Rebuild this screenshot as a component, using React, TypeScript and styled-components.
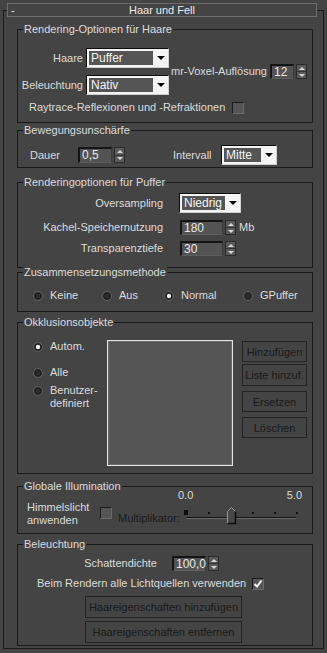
import React from "react";
import styled, { createGlobalStyle } from "styled-components";

const GlobalStyle = createGlobalStyle`
  html, body {
    margin: 0;
    padding: 0;
    background: #444444;
  }
  body {
    font-family: "Liberation Sans", Arial, sans-serif;
    font-size: 11px;
    color: #dcdcdc;
  }
  * {
    box-sizing: border-box;
  }
`;

const Page = styled.div`
  width: 327px;
  height: 653px;
  padding-top: 10px;
  overflow: hidden;
`;

const Frame = styled.div`
  margin-left: 3px;
  width: 321px;
  height: 639px;
  border: 1px solid #1a1a1a;
`;

const Header = styled.div`
  margin: -8px 6px 0 3px;
  height: 14px;
  border: 1px solid #6e6e6e;
  background: #444444;
  display: grid;
  grid-template-columns: 24px 1fr 24px;
  align-items: center;
  line-height: 12px;
  color: #ececec;
`;

const Collapse = styled.span`
  padding-left: 3px;
`;

const HeaderTitle = styled.span`
  text-align: center;
`;

const Group = styled.div<{ $mt: number; $h: number }>`
  margin: ${(p) => p.$mt}px 0 0 13px;
  width: 296px;
  height: ${(p) => p.$h}px;
  border: 1px solid #1a1a1a;
`;

const GroupTitle = styled.div`
  width: fit-content;
  margin: -7px 0 0 5px;
  padding: 0 1px;
  height: 13px;
  line-height: 13px;
  background: #444444;
  white-space: nowrap;
`;

const Row = styled.div<{ $mt?: number; $pl?: number; $h?: number }>`
  display: flex;
  align-items: center;
  margin-top: ${(p) => p.$mt ?? 0}px;
  padding-left: ${(p) => p.$pl ?? 0}px;
  height: ${(p) => (p.$h ? `${p.$h}px` : "auto")};
`;

const Label = styled.span<{ $w?: number; $right?: boolean; $ml?: number; $dim?: boolean }>`
  display: inline-block;
  white-space: nowrap;
  line-height: 13px;
  width: ${(p) => (p.$w ? `${p.$w}px` : "auto")};
  margin-left: ${(p) => p.$ml ?? 0}px;
  text-align: ${(p) => (p.$right ? "right" : "left")};
  color: ${(p) => (p.$dim ? "#1a1a1a" : "#dcdcdc")};
`;

/* dropdown */
const Drop = styled.div<{ $w: number; $ml?: number }>`
  display: flex;
  width: ${(p) => p.$w}px;
  height: 20px;
  margin-left: ${(p) => p.$ml ?? 0}px;
  background: #f4f4f4;
  border-top: 1px solid #0c0c0c;
  border-left: 1px solid #0c0c0c;
  border-right: 1px solid #d0d0d0;
  border-bottom: 1px solid #d0d0d0;
  padding: 2px 0 2px 2px;
`;

const DropText = styled.div`
  flex: 1;
  background: #555555;
  color: #f4f4f4;
  padding-left: 2px;
  line-height: 14px;
  font-size: 12px;
`;

const DropArrow = styled.div`
  width: 15px;
  display: flex;
  align-items: center;
  justify-content: center;
  &::after {
    content: "";
    border-left: 4px solid transparent;
    border-right: 4px solid transparent;
    border-top: 4px solid #000000;
  }
`;

const Dropdown = ({ value, w, ml }: { value: string; w: number; ml?: number }) => (
  <Drop $w={w} $ml={ml}>
    <DropText>{value}</DropText>
    <DropArrow />
  </Drop>
);

/* spinner */
const Field = styled.div<{ $w: number; $h?: number; $ml?: number }>`
  width: ${(p) => p.$w}px;
  height: ${(p) => p.$h ?? 15}px;
  margin-left: ${(p) => p.$ml ?? 0}px;
  background: #535353;
  border-top: 2px solid #141414;
  border-left: 2px solid #141414;
  border-right: 1px solid #3c3c3c;
  border-bottom: 1px solid #5e5e5e;
  color: #e8e8e8;
  padding-left: 2px;
  line-height: 12px;
  font-size: 12px;
`;

const SpinBox = styled.div<{ $h?: number }>`
  width: 11px;
  height: ${(p) => p.$h ?? 15}px;
  margin-left: 2px;
  border: 1px solid #2a2a2a;
  background: #5a5a5a;
  display: flex;
  flex-direction: column;
`;

const SpinHalf = styled.div<{ $down?: boolean }>`
  flex: 1;
  display: flex;
  align-items: center;
  justify-content: center;
  border-top: ${(p) => (p.$down ? "1px solid #343434" : "none")};
  &::after {
    content: "";
    border-left: 3px solid transparent;
    border-right: 3px solid transparent;
    ${(p) => (p.$down ? "border-top: 3px solid #d6d6d6;" : "border-bottom: 3px solid #d6d6d6;")}
  }
`;

const Spinner = ({ value, w, h, ml }: { value: string; w: number; h?: number; ml?: number }) => (
  <>
    <Field $w={w} $h={h} $ml={ml}>
      {value}
    </Field>
    <SpinBox $h={h}>
      <SpinHalf />
      <SpinHalf $down />
    </SpinBox>
  </>
);

/* checkbox, radio */
const Check = styled.div<{ $ml?: number; $mt?: number }>`
  width: 12px;
  height: 12px;
  margin-left: ${(p) => p.$ml ?? 0}px;
  margin-top: ${(p) => p.$mt ?? 0}px;
  flex-shrink: 0;
  background: #555555;
  border-top: 1px solid #1a1a1a;
  border-left: 1px solid #1a1a1a;
  border-right: 1px solid #6a6a6a;
  border-bottom: 1px solid #6a6a6a;
  display: flex;
  align-items: center;
  justify-content: center;
`;

const Checkbox = ({ checked, ml, mt }: { checked?: boolean; ml?: number; mt?: number }) => (
  <Check $ml={ml} $mt={mt}>
    {checked && (
      <svg width="10" height="10" viewBox="0 0 10 10">
        <path d="M1.5 5 L4 7.5 L8.5 1.5" stroke="#f2f2f2" strokeWidth="2" fill="none" />
      </svg>
    )}
  </Check>
);

const Radio = ({ on }: { on?: boolean }) => (
  <svg width="10" height="10" viewBox="0 0 10 10" style={{ flexShrink: 0 }}>
    <circle cx="5" cy="5" r="4.5" fill="#2c2c2c" stroke="#626262" />
    <circle cx="5" cy="5" r="3" fill="none" stroke="#1c1c1c" />
    {on && <circle cx="5" cy="5" r="2.2" fill="#f2f2f2" />}
  </svg>
);

const RadioItem = styled.div<{ $w?: number; $mt?: number }>`
  display: flex;
  align-items: flex-start;
  gap: 7px;
  width: ${(p) => (p.$w ? `${p.$w}px` : "auto")};
  margin-top: ${(p) => p.$mt ?? 0}px;
  line-height: 13px;
  svg {
    margin-top: 2px;
  }
`;

/* group 1 */
const DropGrid = styled.div`
  display: grid;
  grid-template-columns: 65px 83px;
  column-gap: 3px;
  row-gap: 7px;
  align-items: center;
`;

/* group 3 / 7 forms */
const FormRow = styled.div<{ $mt: number; $col: number; $gap: number; $h: number }>`
  display: flex;
  align-items: center;
  margin-top: ${(p) => p.$mt}px;
  height: ${(p) => p.$h}px;
  & > span:first-child {
    width: ${(p) => p.$col}px;
    margin-right: ${(p) => p.$gap}px;
    text-align: right;
  }
`;

/* occlusion */
const OccRow = styled.div`
  display: flex;
  align-items: flex-start;
  margin-top: 11px;
  padding-left: 15px;
`;

const RadioCol = styled.div`
  width: 74px;
  display: flex;
  flex-direction: column;
`;

const ListBox = styled.div`
  width: 126px;
  height: 126px;
  background: #555555;
  border: 1px solid #e6e6e6;
  box-shadow: inset 0 0 0 1px #6a6a6a;
`;

const ButtonCol = styled.div`
  display: flex;
  flex-direction: column;
  margin-left: 9px;
`;

const Button = styled.div<{ $w: number; $h: number; $mt?: number; $ml?: number }>`
  width: ${(p) => p.$w}px;
  height: ${(p) => p.$h}px;
  margin-top: ${(p) => p.$mt ?? 0}px;
  margin-left: ${(p) => p.$ml ?? 0}px;
  border: 1px solid #242424;
  color: #1a1a1a;
  display: flex;
  align-items: center;
  justify-content: center;
  white-space: nowrap;
  font-size: 11px;
`;

/* global illumination */
const TwoLine = styled.div`
  width: 73px;
  line-height: 13px;
  padding-left: 9px;
  box-sizing: content-box;
`;

const SliderBlock = styled.div`
  width: 125px;
  margin-top: -12px;
  display: flex;
  flex-direction: column;
`;

const Scale = styled.div`
  display: flex;
  justify-content: space-between;
  line-height: 12px;
  height: 12px;
  color: #dcdcdc;
  padding-right: 1px;
`;

const Slider = () => (
  <svg width="116" height="24" viewBox="0 0 116 24" style={{ marginLeft: 5 }}>
    <rect x="1" y="9" width="4" height="5" fill="#0c0c0c" />
    {[25, 69, 91, 113].map((x) => (
      <rect key={x} x={x} y="11" width="2" height="2" fill="#111" />
    ))}
    <line x1="3" y1="16.5" x2="113" y2="16.5" stroke="#161616" />
    <line x1="3" y1="17.5" x2="113" y2="17.5" stroke="#6a6a6a" />
    <path d="M44.5 22.5 V10.5 L48.5 6.5 L52.5 10.5 V22.5 Z" fill="#474747" stroke="#9a9a9a" />
    <path d="M44.5 22.5 H52.5 V10.5" fill="none" stroke="#0c0c0c" strokeWidth="1.5" />
  </svg>
);

export default function App() {
  return (
    <>
      <GlobalStyle />
      <Page>
        <Frame>
          <Header>
            <Collapse>-</Collapse>
            <HeaderTitle>Haar und Fell</HeaderTitle>
            <span />
          </Header>

          <Group $mt={12} $h={94}>
            <GroupTitle>Rendering-Optionen für Haare</GroupTitle>
            <Row $mt={12}>
              <DropGrid>
                <Label $right>Haare</Label>
                <Dropdown value="Puffer" w={83} />
                <Label $right>Beleuchtung</Label>
                <Dropdown value="Nativ" w={83} />
              </DropGrid>
              <Label $ml={2}>mr-Voxel-Auflösung</Label>
              <Spinner value="12" w={24} ml={3} />
            </Row>
            <Row $mt={6} $pl={11} $h={13}>
              <Label>Raytrace-Reflexionen und -Refraktionen</Label>
              <Checkbox ml={7} />
            </Row>
          </Group>

          <Group $mt={7} $h={38}>
            <GroupTitle>Bewegungsunschärfe</GroupTitle>
            <Row $mt={8} $pl={12} $h={20}>
              <Label $w={48}>Dauer</Label>
              <Spinner value="0,5" w={34} h={16} />
              <Label $w={48} $ml={48}>
                Intervall
              </Label>
              <Dropdown value="Mitte" w={56} />
            </Row>
          </Group>

          <Group $mt={14} $h={86}>
            <GroupTitle>Renderingoptionen für Puffer</GroupTitle>
            <FormRow $mt={4} $col={145} $gap={16} $h={20}>
              <Label>Oversampling</Label>
              <Dropdown value="Niedrig" w={62} />
            </FormRow>
            <FormRow $mt={7} $col={145} $gap={17} $h={15}>
              <Label>Kachel-Speichernutzung</Label>
              <Spinner value="180" w={43} />
              <Label $ml={3}>Mb</Label>
            </FormRow>
            <FormRow $mt={6} $col={145} $gap={17} $h={15}>
              <Label>Transparenztiefe</Label>
              <Spinner value="30" w={43} />
            </FormRow>
          </Group>

          <Group $mt={4} $h={40}>
            <GroupTitle>Zusammensetzungsmethode</GroupTitle>
            <Row $mt={10} $pl={15} $h={12}>
              <RadioItem $w={69}>
                <Radio />
                Keine
              </RadioItem>
              <RadioItem $w={62}>
                <Radio />
                Aus
              </RadioItem>
              <RadioItem $w={79}>
                <Radio on />
                Normal
              </RadioItem>
              <RadioItem>
                <Radio />
                GPuffer
              </RadioItem>
            </Row>
          </Group>

          <Group $mt={10} $h={152}>
            <GroupTitle>Okklusionsobjekte</GroupTitle>
            <OccRow>
              <RadioCol>
                <RadioItem>
                  <Radio on />
                  Autom.
                </RadioItem>
                <RadioItem $mt={13}>
                  <Radio />
                  Alle
                </RadioItem>
                <RadioItem $mt={5}>
                  <Radio />
                  <span>
                    Benutzer-
                    <br />
                    definiert
                  </span>
                </RadioItem>
              </RadioCol>
              <ListBox />
              <ButtonCol>
                <Button $w={65} $h={21} $mt={1}>
                  Hinzufügen
                </Button>
                <Button $w={65} $h={22} $mt={2}>
                  Liste hinzuf.
                </Button>
                <Button $w={65} $h={21} $mt={5}>
                  Ersetzen
                </Button>
                <Button $w={65} $h={21} $mt={5}>
                  Löschen
                </Button>
              </ButtonCol>
            </OccRow>
          </Group>

          <Group $mt={12} $h={48}>
            <GroupTitle>Globale Illumination</GroupTitle>
            <Row $mt={8} style={{ alignItems: "flex-start" }}>
              <TwoLine>
                Himmelslicht
                <br />
                anwenden
              </TwoLine>
              <Checkbox mt={6} />
              <Label $dim $ml={6} $w={60} style={{ marginTop: 11 }}>
                Multiplikator:
              </Label>
              <SliderBlock>
                <Scale>
                  <span>0.0</span>
                  <span>5.0</span>
                </Scale>
                <Slider />
              </SliderBlock>
            </Row>
          </Group>

          <Group $mt={10} $h={102}>
            <GroupTitle>Beleuchtung</GroupTitle>
            <FormRow $mt={5} $col={139} $gap={15} $h={15}>
              <Label>Schattendichte</Label>
              <Spinner value="100,0" w={34} />
            </FormRow>
            <Row $mt={6} $pl={19} $h={13}>
              <Label>Beim Rendern alle Lichtquellen verwenden</Label>
              <Checkbox checked ml={6} />
            </Row>
            <Button $w={157} $h={22} $mt={6} $ml={67}>
              Haareigenschaften hinzufügen
            </Button>
            <Button $w={157} $h={22} $mt={3} $ml={67}>
              Haareigenschaften entfernen
            </Button>
          </Group>
        </Frame>
      </Page>
    </>
  );
}
